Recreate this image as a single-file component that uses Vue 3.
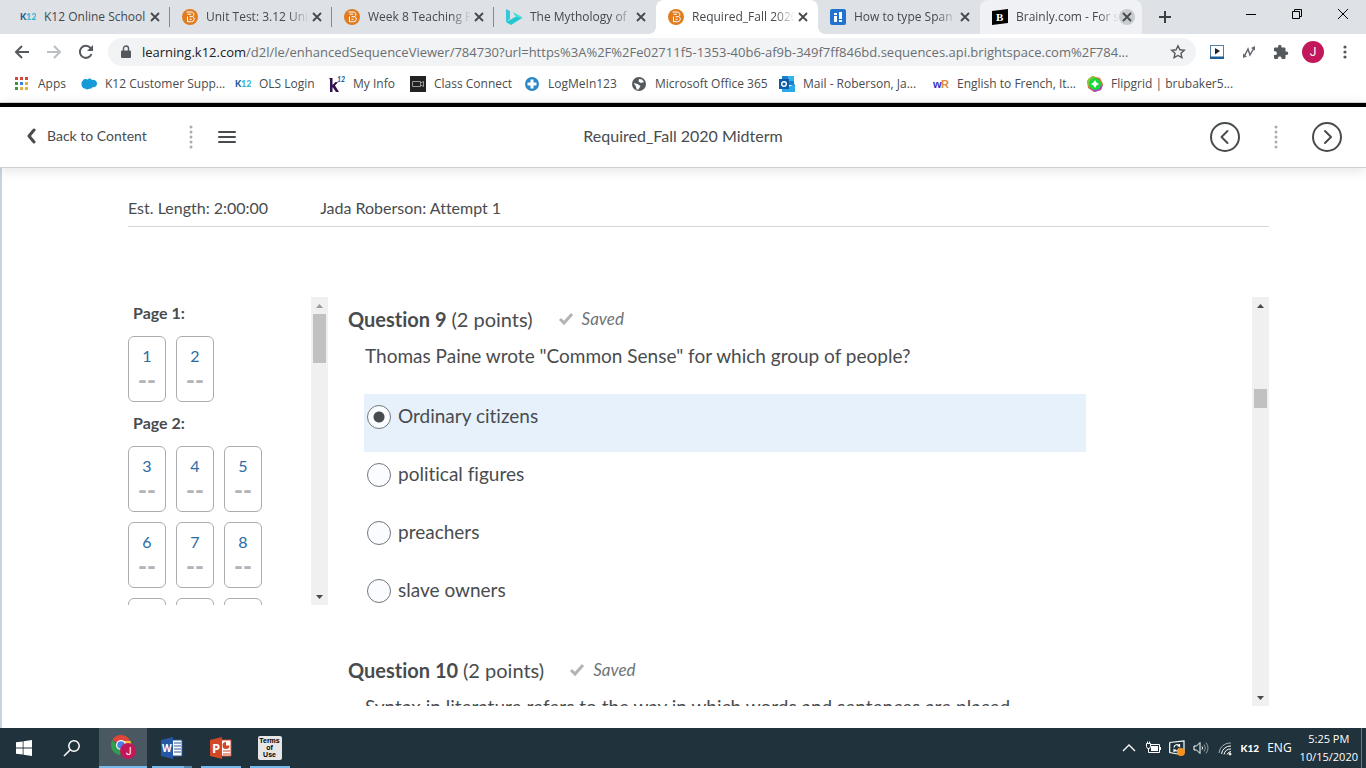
<script setup>
import { ref } from "vue";

const tabs = [
  { title: "K12 Online School", icon: "k12" },
  { title: "Unit Test: 3.12 Uni", icon: "brightspace" },
  { title: "Week 8 Teaching P", icon: "brightspace" },
  { title: "The Mythology of", icon: "bing" },
  { title: "Required_Fall 2020", icon: "brightspace", active: true },
  { title: "How to type Span", icon: "howto" },
  { title: "Brainly.com - For s", icon: "brainly", hovered: true },
];

const bookmarks = [
  { title: "Apps", icon: "apps" },
  { title: "K12 Customer Supp...", icon: "cloud" },
  { title: "OLS Login", icon: "k12" },
  { title: "My Info", icon: "myinfo" },
  { title: "Class Connect", icon: "camera" },
  { title: "LogMeIn123", icon: "logmein" },
  { title: "Microsoft Office 365", icon: "globe" },
  { title: "Mail - Roberson, Ja...", icon: "outlook" },
  { title: "English to French, It...", icon: "wordref" },
  { title: "Flipgrid | brubaker5...", icon: "flipgrid" },
];

const pages = [
  { name: "Page 1:", questions: [1, 2] },
  { name: "Page 2:", questions: [3, 4, 5, 6, 7, 8, 9, 10, 11] },
];

const questions = [
  {
    number: 9,
    text: 'Thomas Paine wrote "Common Sense" for which group of people?',
    options: ["Ordinary citizens", "political figures", "preachers", "slave owners"],
  },
  {
    number: 10,
    text: "Syntax in literature refers to the way in which words and sentences are placed",
    options: [],
  },
];

const answers = ref({ 9: "Ordinary citizens" });

const listScroll = { top: 0, size: 18 };
const quizScroll = { top: 20, size: 5 };
</script>

<template>
  <svg class="sprite" aria-hidden="true">
    <symbol id="k12" viewBox="0 0 16 16">
      <text x="0" y="11" font-family="Lato, sans-serif" font-weight="900" font-size="9" fill="#1c5c96">K</text>
      <text x="6" y="11" font-family="Lato, sans-serif" font-weight="900" font-size="9" fill="#35b8d8">12</text>
    </symbol>
    <symbol id="brightspace" viewBox="0 0 16 16">
      <circle cx="8" cy="8" r="8" fill="#e07b1f" />
      <path d="M4.500 3h4.700a2.400 2.400 0 0 1 1.400 4.500a2.700 2.700 0 0 1-1 5.200H5.500V7.500" fill="none" stroke="#fff" />
      <path d="M5.500 5.200h3.700M7.500 7.700h3M7.500 10.300h2.200" fill="none" stroke="#fff" />
    </symbol>
    <symbol id="bing" viewBox="0 0 16 16">
      <path d="M0 0l4 2v8l-4 3z" fill="#35c8d8" />
      <path d="M0 13l11-6 5 2-11 7z" fill="#22c7cf" />
      <path d="M7 3l9 5v2l-7-3z" fill="#45e0dc" />
    </symbol>
    <symbol id="howto" viewBox="0 0 16 16">
      <rect width="16" height="16" rx="2" fill="#2273d0" />
      <path d="M4 4h3v2H4zM4 7h3v6H4zM9 3h3v7H9zM9 11h3v2H9z" fill="#fff" />
    </symbol>
    <symbol id="brainly" viewBox="0 0 16 16">
      <path d="M0 2l16-2v14l-16 2z" fill="#000" />
      <text x="4" y="12" font-family="Liberation Serif, serif" font-weight="700" font-size="11" fill="#fff">B</text>
    </symbol>
    <symbol id="close" viewBox="0 0 16 16">
      <path d="M4 4l8 8M12 4l-8 8" stroke="#45494d" stroke-width="1.800" />
    </symbol>
    <symbol id="apps" viewBox="0 0 16 16">
      <path d="M1 1h3v3H1zM6 1h3v3H6zM11 1h3v3h-3z" fill="#d6483c" />
      <path d="M1 6h3v3H1z" fill="#3a9150" />
      <path d="M6 6h3v3H6z" fill="#3d7de0" />
      <path d="M11 6h3v3h-3zM6 11h3v3H6zM11 11h3v3h-3z" fill="#e8b03a" />
      <path d="M1 11h3v3H1z" fill="#3a9150" />
    </symbol>
    <symbol id="cloud" viewBox="0 0 16 16">
      <path d="M4 12.500a3.400 3.400 0 0 1-3.300-4A3 3 0 0 1 1.500 5a3.500 3.500 0 0 1 5-1.600a3.200 3.200 0 0 1 4.500.6a3.700 3.700 0 0 1 5 3.500a3.700 3.700 0 0 1-4.600 3.700A3 3 0 0 1 8 12.700a3 3 0 0 1-4-.2z" fill="#169bd8" />
    </symbol>
    <symbol id="myinfo" viewBox="0 0 16 16">
      <path d="M0 2h3.500v7l3-3H9L6 9.500l4 6.500H7l-3.500-5v5H1V3.500z" fill="#35124f" />
      <text x="8" y="6" font-family="Lato, sans-serif" font-style="italic" font-weight="900" font-size="7" fill="#1c5c96">12</text>
    </symbol>
    <symbol id="camera" viewBox="0 0 16 16">
      <rect width="16" height="16" fill="#222" />
      <path d="M2.500 5.500h8v5h-8zM10.500 7l3-1.500v5l-3-1.500z" fill="none" stroke="#999" />
    </symbol>
    <symbol id="logmein" viewBox="0 0 16 16">
      <circle cx="8" cy="8" r="7" fill="#2a88c8" />
      <path d="M8 3.500v9M3.500 8h9" stroke="#fff" stroke-width="3" />
    </symbol>
    <symbol id="globe" viewBox="0 0 16 16">
      <circle cx="8" cy="8" r="7" fill="#55595d" />
      <path d="M2.500 7l4 1 3 2-2 3.500h-2l-.5-3zM8 3l3 .5 2 2.500-3 1-2.500-1.500z" fill="#fff" />
    </symbol>
    <symbol id="outlook" viewBox="0 0 16 16">
      <path d="M3 0h12v9H3z" fill="#1b7fd0" />
      <path d="M9 0h6v5H9z" fill="#35b4ee" />
      <path d="M3 9l6 2 7-3v8H3z" fill="#28a8ea" />
      <path d="M0 3h10v10H0z" fill="#0c5ba8" />
      <circle cx="5" cy="8" r="2.300" fill="none" stroke="#fff" stroke-width="1.400" />
    </symbol>
    <symbol id="wordref" viewBox="0 0 16 16">
      <text x="0" y="12" font-family="Liberation Sans, sans-serif" font-weight="700" font-size="11" fill="#3a2fc0">w</text>
      <text x="8" y="12" font-family="Liberation Sans, sans-serif" font-weight="700" font-size="11" fill="#e08a3a">R</text>
    </symbol>
    <symbol id="flipgrid" viewBox="0 0 16 16">
      <path d="M5 0l8 2 3 6-2 6-7 2-6-4L0 5z" fill="#e0703a" />
      <path d="M0 6l2-4 5-2 3 3-8 8z" fill="#7fc93a" />
      <path d="M2 12l6 4 6-2 2-5z" fill="#a84ac0" />
      <circle cx="8" cy="8" r="6" fill="#16d83a" />
      <path d="M8 4l1.500 2.500L12 8 9.500 9.500 8 12 6.500 9.500 4 8l2.500-1.500z" fill="#fff" />
    </symbol>
    <symbol id="dots" viewBox="0 0 4 24">
      <g fill="#a9adb0">
        <circle cx="2" cy="2" r="1.500" />
        <circle cx="2" cy="7" r="1.500" />
        <circle cx="2" cy="12" r="1.500" />
        <circle cx="2" cy="17" r="1.500" />
        <circle cx="2" cy="22" r="1.500" />
      </g>
    </symbol>
    <symbol id="arrow-up" viewBox="0 0 17 17">
      <path d="M5 11l3.500-4 3.500 4z" fill="currentColor" />
    </symbol>
    <symbol id="arrow-down" viewBox="0 0 17 17">
      <path d="M5 7l3.500 4 3.500-4z" fill="currentColor" />
    </symbol>
  </svg>

  <div class="screen">
    <div class="tab-strip">
      <div
        v-for="tab in tabs"
        :key="tab.title"
        class="tab"
        :class="{ active: tab.active, hovered: tab.hovered }"
      >
        <svg class="icon"><use :href="'#' + tab.icon" /></svg>
        <span class="tab-title">{{ tab.title }}</span>
        <button class="tab-close" aria-label="Close tab">
          <svg class="icon"><use href="#close" /></svg>
        </button>
      </div>
      <button class="new-tab" aria-label="New tab">
        <svg width="14" height="14" viewBox="0 0 14 14">
          <path d="M7 1v12M1 7h12" stroke="#3c4043" stroke-width="2" />
        </svg>
      </button>
      <div class="window-controls">
        <button aria-label="Minimize">
          <svg width="12" height="12" viewBox="0 0 12 12"><path d="M1 6.500h10" stroke="#000" /></svg>
        </button>
        <button aria-label="Restore">
          <svg width="12" height="12" viewBox="0 0 12 12">
            <path d="M1.500 3.500h7v7h-7zM3.500 3.500v-2h7v7h-2" fill="none" stroke="#000" />
          </svg>
        </button>
        <button aria-label="Close">
          <svg width="12" height="12" viewBox="0 0 12 12"><path d="M1 1l10 10M11 1L1 11" stroke="#000" /></svg>
        </button>
      </div>
    </div>

    <div class="toolbar">
      <button aria-label="Back">
        <svg width="16" height="16" viewBox="0 0 16 16">
          <path d="M15 8H2M8 2L2 8l6 6" fill="none" stroke="#55595d" stroke-width="2" />
        </svg>
      </button>
      <button aria-label="Forward">
        <svg width="16" height="16" viewBox="0 0 16 16">
          <path d="M1 8h13M8 2l6 6-6 6" fill="none" stroke="#bcbfc3" stroke-width="2" />
        </svg>
      </button>
      <button aria-label="Reload">
        <svg width="16" height="16" viewBox="0 0 16 16">
          <path d="M13.500 10A6 6 0 1 1 12.500 4l1 1" fill="none" stroke="#55595d" stroke-width="2" />
          <path d="M15 1v6H9z" fill="#55595d" />
        </svg>
      </button>
      <div class="address-bar">
        <svg width="10" height="14" viewBox="0 0 10 14">
          <path d="M1 5.500h8a1 1 0 0 1 1 1V12a1 1 0 0 1-1 1H1a1 1 0 0 1-1-1V6.500a1 1 0 0 1 1-1z" fill="#55595d" />
          <path d="M2.500 6V3.500a2.500 2.500 0 0 1 5 0V6" fill="none" stroke="#55595d" stroke-width="1.400" />
        </svg>
        <span class="url"><b>learning.k12.com</b>/d2l/le/enhancedSequenceViewer/784730?url=https%3A%2F%2Fe02711f5-1353-40b6-af9b-349f7ff846bd.sequences.api.brightspace.com%2F784...</span>
        <button aria-label="Bookmark this tab">
          <svg width="16" height="16" viewBox="0 0 16 16">
            <path d="M8 1.800l1.900 4 4.400.5-3.300 3 .9 4.400L8 11.500l-3.900 2.200.9-4.400-3.300-3 4.400-.5z" fill="none" stroke="#55595d" stroke-width="1.400" />
          </svg>
        </button>
      </div>
      <div class="extensions">
        <button aria-label="Video extension">
          <svg width="16" height="16" viewBox="0 0 16 16">
            <rect x="1.500" y="1.500" width="13" height="12" fill="#fff" stroke="#55809f" />
            <path d="M1 12.500h14V15H1z" fill="#1d5f94" />
            <path d="M6 4l5 3-5 3.500z" fill="#222" />
          </svg>
        </button>
        <button aria-label="Pen extension">
          <svg width="16" height="16" viewBox="0 0 16 16">
            <path d="M3.500 12L7 5l2 6 4-7" fill="none" stroke="#65696d" stroke-width="1.500" />
            <path d="M2 9.500V14l4-1.500zM10 4l4-2v4.500z" fill="#65696d" />
          </svg>
        </button>
        <button aria-label="Extensions">
          <svg width="16" height="16" viewBox="0 0 16 16">
            <path d="M13.500 7.500h-1V4.800c0-.8-.6-1.300-1.300-1.300H8.500v-1a1.700 1.700 0 0 0-3.400 0v1H2.400C1.600 3.500 1 4 1 4.800v2.500h1a1.900 1.900 0 0 1 0 3.800H1v2.600c0 .8.600 1.300 1.400 1.300h2.500v-1a1.900 1.900 0 0 1 3.700 0v1h2.600c.7 0 1.300-.5 1.300-1.300V11h1a1.700 1.700 0 0 0 0-3.500z" fill="#55595d" />
          </svg>
        </button>
        <button class="avatar" aria-label="Profile">J</button>
        <button aria-label="Menu">
          <svg width="16" height="16" viewBox="0 0 16 16" fill="#55595d">
            <circle cx="8" cy="3" r="1.600" />
            <circle cx="8" cy="8" r="1.600" />
            <circle cx="8" cy="13" r="1.600" />
          </svg>
        </button>
      </div>
    </div>

    <nav class="bookmarks">
      <a v-for="item in bookmarks" :key="item.title" href="#">
        <svg class="icon"><use :href="'#' + item.icon" /></svg>
        {{ item.title }}
      </a>
    </nav>

    <header class="viewer-header">
      <div class="header-left">
        <a class="back-link" href="#">
          <svg width="10" height="16" viewBox="0 0 10 16">
            <path d="M8 2L3 8l5 6" fill="none" stroke="#494c4e" stroke-width="3" stroke-linecap="round" stroke-linejoin="round" />
          </svg>
          Back to Content
        </a>
        <svg class="dots"><use href="#dots" /></svg>
        <button aria-label="Open table of contents">
          <svg width="18" height="14" viewBox="0 0 18 14">
            <path d="M1 2h16M1 7h16M1 12h16" stroke="#494c4e" stroke-width="2" stroke-linecap="round" />
          </svg>
        </button>
      </div>
      <h1>Required_Fall 2020 Midterm</h1>
      <div class="header-right">
        <button aria-label="Previous">
          <svg width="30" height="30" viewBox="0 0 30 30" fill="none" stroke="#494c4e" stroke-width="2">
            <circle cx="15" cy="15" r="14" />
            <path d="M17.500 9L11.500 15l6 6" stroke-linecap="round" stroke-linejoin="round" />
          </svg>
        </button>
        <svg class="dots"><use href="#dots" /></svg>
        <button aria-label="Next">
          <svg width="30" height="30" viewBox="0 0 30 30" fill="none" stroke="#494c4e" stroke-width="2">
            <circle cx="15" cy="15" r="14" />
            <path d="M13 9l6 6-6 6" stroke-linecap="round" stroke-linejoin="round" />
          </svg>
        </button>
      </div>
    </header>

    <main class="quiz">
      <div class="quiz-info">
        <span>Est. Length: 2:00:00</span>
        <span>Jada Roberson: Attempt 1</span>
      </div>

      <div class="quiz-body">
        <aside class="pane page-pane">
          <div class="pane-content">
            <section v-for="page in pages" :key="page.name" class="page-group">
              <h2>{{ page.name }}</h2>
              <div class="page-questions">
                <a v-for="n in page.questions" :key="n" href="#" class="question-box">
                  <span>{{ n }}</span>
                  <span class="dashes">--</span>
                </a>
              </div>
            </section>
          </div>
          <div class="scrollbar at-top">
            <svg class="arrow arrow-up"><use href="#arrow-up" /></svg>
            <div class="track">
              <div :style="{ height: listScroll.top + '%' }"></div>
              <div class="thumb" :style="{ height: listScroll.size + '%' }"></div>
            </div>
            <svg class="arrow"><use href="#arrow-down" /></svg>
          </div>
        </aside>

        <div class="pane question-pane">
          <div class="pane-content">
            <section v-for="q in questions" :key="q.number" class="question">
              <div class="question-head">
                <h2>Question {{ q.number }} <span>(2 points)</span></h2>
                <span class="saved">
                  <svg width="16" height="14" viewBox="0 0 16 14">
                    <path d="M2 7l4 4 8-9" fill="none" stroke="#b1b5b8" stroke-width="3" />
                  </svg>
                  Saved
                </span>
              </div>
              <p>{{ q.text }}</p>
              <div class="options">
                <label
                  v-for="option in q.options"
                  :key="option"
                  :class="{ selected: answers[q.number] === option }"
                >
                  <input
                    type="radio"
                    :name="'question-' + q.number"
                    :value="option"
                    v-model="answers[q.number]"
                  />
                  {{ option }}
                </label>
              </div>
            </section>
          </div>
          <div class="scrollbar">
            <svg class="arrow arrow-up"><use href="#arrow-up" /></svg>
            <div class="track">
              <div :style="{ height: quizScroll.top + '%' }"></div>
              <div class="thumb" :style="{ height: quizScroll.size + '%' }"></div>
            </div>
            <svg class="arrow"><use href="#arrow-down" /></svg>
          </div>
        </div>
      </div>
    </main>

    <footer class="taskbar">
      <button class="task" aria-label="Start">
        <svg width="16" height="16" viewBox="0 0 16 16">
          <path d="M0 2.300L6.700 1.400v6.200H0zM7.500 1.300L16 0v7.600H7.500zM0 8.400h6.700v6.200L0 13.700zM7.500 8.400H16V16l-8.500-1.300z" fill="#fff" />
        </svg>
      </button>
      <button class="task" aria-label="Search">
        <svg width="18" height="18" viewBox="0 0 18 18" fill="none" stroke="#fff" stroke-width="1.500">
          <circle cx="11" cy="7" r="5.200" />
          <path d="M7.300 10.700L1 17" />
        </svg>
      </button>
      <button class="task current" aria-label="Chrome">
        <svg width="26" height="26" viewBox="0 0 26 26">
          <path d="M11 11L2.300 6A10 10 0 0 1 20 6.500L21 9H11z" fill="#e0453a" />
          <path d="M2.300 6A10 10 0 0 0 10 21l4-7-4-1z" fill="#2f9e50" />
          <path d="M12 7h8.500a10 10 0 0 1-9.500 14l4-7z" fill="#f7c535" />
          <circle cx="11" cy="11" r="5" fill="#fff" />
          <circle cx="11" cy="11" r="3.800" fill="#4a83e8" />
          <circle cx="18" cy="17" r="8" fill="#c2185b" />
          <text x="16" y="21" font-family="Roboto, sans-serif" font-size="10" fill="#fff">J</text>
        </svg>
      </button>
      <button class="task running grouped" aria-label="Word">
        <svg width="24" height="22" viewBox="0 0 24 22">
          <path d="M12 3h10v16H12z" fill="#fff" stroke="#2b579a" />
          <path d="M14 6h7M14 9h7M14 12h7M14 15h7" stroke="#2b579a" stroke-width="1.200" />
          <path d="M1 3l12-3v22L1 19z" fill="#2458a6" />
          <text x="2" y="15" font-family="Open Sans, sans-serif" font-weight="700" font-size="10" fill="#fff">W</text>
        </svg>
      </button>
      <button class="task running" aria-label="PowerPoint">
        <svg width="24" height="22" viewBox="0 0 24 22">
          <path d="M12 3h10v16H12z" fill="#fff" stroke="#d24726" />
          <path d="M14 14h7M14 17h7" stroke="#d24726" stroke-width="1.200" />
          <path d="M17 5a3.500 3.500 0 1 0 3.500 3.500H17z" fill="#d24726" />
          <path d="M1 3l12-3v22L1 19z" fill="#d24726" />
          <text x="3" y="16" font-family="Open Sans, sans-serif" font-weight="700" font-size="13" fill="#fff">P</text>
        </svg>
      </button>
      <button class="task running" aria-label="Terms of Use">
        <span class="terms">Terms<br />of<br />Use</span>
      </button>

      <div class="tray">
        <svg width="16" height="16" viewBox="0 0 16 16" fill="none" stroke="#fff" stroke-width="1.400">
          <path d="M2 11l6-6 6 6" />
        </svg>
        <svg width="16" height="16" viewBox="0 0 16 16" fill="none" stroke="#fff">
          <path d="M5 4.500h9.500v8H3.500V9M1.500 3.500h4v3l-1 2h-2l-1-2zM2.500 1.500v2M4.500 1.500v2M15.500 7v3" />
          <path d="M6 6h7v5H6z" fill="#fff" stroke="none" />
        </svg>
        <svg width="16" height="16" viewBox="0 0 16 16" fill="none" stroke="#fff">
          <path d="M.7 2.500L15 1v10M.7 2.500v10L9 14" stroke-width="1.200" />
          <path d="M5 7.500a3 3 0 0 1 5.500-1.500V4M10.500 6h-2M10 8.500A3 3 0 0 1 5 10v2M5 10h2" stroke-width="1.200" />
          <circle cx="12" cy="12" r="4" fill="#f7941d" stroke="none" />
        </svg>
        <svg width="16" height="16" viewBox="0 0 16 16" fill="none" stroke="#fff">
          <path d="M1 6h2.500L7 2.500v11L3.500 10H1z" />
          <path d="M9 6.500q1.200 1.500 0 3" />
          <path d="M11 4.500q3 3.500 0 7M13 2.500q4 5.500 0 11" opacity=".5" />
        </svg>
        <svg width="16" height="16" viewBox="0 0 16 16" fill="none" stroke="#fff">
          <path d="M2 13A11 11 0 0 1 14 3" opacity=".6" />
          <path d="M4.500 14A9 9 0 0 1 14 6M7 14.500A7 7 0 0 1 14 9M10 14.500A5 5 0 0 1 14 11.500" />
          <circle cx="13" cy="14" r="1" fill="#fff" />
        </svg>
        <span class="tray-k12">K12</span>
        <span>ENG</span>
        <time>5:25 PM<br />10/15/2020</time>
      </div>
    </footer>
  </div>
</template>

<style>
body {
  margin: 0;
}
</style>

<style scoped>
* {
  box-sizing: border-box;
}
.screen {
  display: flex;
  flex-direction: column;
  height: 100vh;
  background: #fff;
  color: #494c4e;
  font-family: Lato, sans-serif;
  font-size: 16px;
  font-variant-ligatures: none;
  line-height: 24px;
  overflow: hidden;
}
.sprite {
  display: none;
}
button {
  display: flex;
  align-items: center;
  justify-content: center;
  padding: 0;
  border: none;
  background: none;
  font: inherit;
  color: inherit;
}
a {
  color: inherit;
  text-decoration: none;
}
svg {
  flex: none;
}
.icon {
  width: 16px;
  height: 16px;
}
.tab-strip,
.toolbar,
.bookmarks,
.taskbar {
  display: flex;
  align-items: center;
  flex: none;
  font-family: "Open Sans", sans-serif;
  font-size: 12px;
}
.tab-strip {
  height: 34px;
  padding-left: 8px;
  background: #dee1e6;
}
.tab {
  position: relative;
  display: flex;
  align-items: center;
  flex: 0 1 162px;
  min-width: 0;
  height: 34px;
  padding: 0 7px 0 12px;
  color: #45494d;
}
.tab-title {
  flex: 1;
  min-width: 0;
  margin-left: 8px;
  overflow: hidden;
  white-space: nowrap;
  mask-image: linear-gradient(to right, #000 80%, transparent);
}
.tab:first-child .tab-title {
  mask-image: none;
}
.tab-close {
  width: 16px;
  height: 16px;
  border-radius: 50%;
}
.tab:nth-child(-n + 3) {
  background: linear-gradient(#85898d, #85898d) right center / 1px 20px no-repeat;
}
.tab.active {
  border-radius: 8px 8px 0 0;
  background: #fff;
}
/* flared feet of the active tab */
.tab.active::before,
.tab.active::after {
  content: "";
  position: absolute;
  bottom: 0;
  width: 8px;
  height: 8px;
}
.tab.active::before {
  right: 100%;
  background: radial-gradient(circle at 0 0, transparent 8px, #fff 8px);
}
.tab.active::after {
  left: 100%;
  background: radial-gradient(circle at 100% 0, transparent 8px, #fff 8px);
}
.tab.hovered {
  border-radius: 8px 8px 0 0;
  background: #eff1f4;
}
.tab.hovered .tab-close {
  background: #c8cbcf;
}
.new-tab {
  width: 28px;
  height: 28px;
  margin-left: 9px;
}
.window-controls {
  display: flex;
  align-self: flex-start;
  margin-left: auto;
}
.window-controls button {
  width: 46px;
  height: 28px;
}
.toolbar {
  height: 36px;
  padding: 0 13px 0 14px;
  gap: 16px;
}
.address-bar {
  display: flex;
  align-items: center;
  flex: 1;
  min-width: 0;
  height: 28px;
  margin-left: -2px;
  padding: 0 10px 0 13px;
  border-radius: 14px;
  background: #f1f3f4;
}
.url {
  flex: 1;
  min-width: 0;
  margin: 0 8px 0 11px;
  overflow: hidden;
  white-space: nowrap;
  font-size: 13px;
  color: #6b6f73;
}
.url b {
  font-weight: 400;
  color: #202124;
}
.extensions {
  display: flex;
  align-items: center;
  gap: 16px;
  margin-left: -3px;
}
.avatar {
  width: 22px;
  height: 22px;
  margin: 0 -3px;
  border-radius: 50%;
  background: #c2185b;
  color: #fff;
  font-family: Roboto, sans-serif;
}
.bookmarks {
  display: grid;
  grid-template-columns: 67px 154px 94px 81px 114px 107px 148px 154px 154px 1fr;
  height: 33px;
  padding: 0 14px 4px;
  border-bottom: 1px solid #d5d7da;
}
.bookmarks a {
  display: flex;
  align-items: center;
  gap: 8px;
  white-space: nowrap;
}
.viewer-header {
  display: grid;
  grid-template-columns: 1fr auto 1fr;
  align-items: center;
  flex: none;
  height: 65px;
  padding: 0 24px;
  border-top: 4px solid #000;
  border-bottom: 1px solid #cdd0d3;
  box-shadow: 0 2px 12px rgba(0, 0, 0, 0.12);
  z-index: 1;
}
.viewer-header h1 {
  margin: 0;
  padding-bottom: 2px;
  font-size: 16px;
  font-weight: 400;
}
.header-left,
.header-right {
  display: flex;
  align-items: center;
}
.header-right {
  justify-content: flex-end;
  gap: 34px;
}
.dots {
  width: 4px;
  height: 24px;
}
.back-link {
  display: flex;
  align-items: center;
  gap: 11px;
  margin: 0 42px 0 2px;
  padding-bottom: 2px;
  font-size: 14px;
}
.header-left button {
  margin-left: 25px;
}
.quiz {
  display: flex;
  flex-direction: column;
  flex: 1;
  min-height: 0;
  padding: 28px 97px 22px 126px;
  border-left: 2px solid #c9d3dd;
}
.quiz-info {
  display: flex;
  gap: 52px;
  padding-bottom: 6px;
  border-bottom: 1px solid #d3d5d8;
}
.quiz-body {
  display: flex;
  align-items: flex-start;
  gap: 20px;
  flex: 1;
  min-height: 0;
  margin-top: 70px;
}
.pane {
  display: flex;
  overflow: hidden;
}
.pane-content {
  flex: 1;
  min-width: 0;
}
.page-pane {
  width: 200px;
  height: 308px;
}
.question-pane {
  flex: 1;
  height: 100%;
}
.page-group {
  padding-top: 4px;
}
.page-group + .page-group {
  padding-top: 9px;
}
.page-group h2 {
  margin: 0 0 11px 5px;
  font-size: 16px;
}
.page-questions {
  display: grid;
  grid-template-columns: repeat(3, 38px);
  gap: 10px;
}
.question-box {
  display: flex;
  flex-direction: column;
  align-items: center;
  height: 66px;
  padding-top: 7px;
  border: 1px solid #a9adb0;
  border-radius: 6px;
  color: #2b6ca3;
}
.dashes {
  color: #b1b5b8;
  font-size: 24px;
  font-weight: 900;
}
.scrollbar {
  display: flex;
  flex-direction: column;
  flex: none;
  width: 17px;
  background: #f0f0f0;
}
.arrow {
  width: 17px;
  height: 17px;
  color: #45494d;
}
.at-top .arrow-up {
  color: #9a9da0;
}
.track {
  flex: 1;
  padding: 0 2px;
}
.thumb {
  background: #c1c1c1;
}
.question {
  padding-top: 11px;
  padding-bottom: 22px;
  font-size: 19px;
  line-height: 22px;
}
.question-head {
  display: flex;
  align-items: center;
}
.question-head h2 {
  margin: 0;
  font-size: 20px;
}
.question-head h2 span {
  font-weight: 400;
}
.saved {
  display: flex;
  align-items: center;
  gap: 8px;
  margin-left: 25px;
  font-size: 17px;
  font-style: italic;
  color: #6e7376;
}
.question p {
  margin: 15px 0 27px 17px;
  white-space: nowrap;
}
.options {
  max-width: 722px;
  margin-left: 16px;
}
.options label {
  display: flex;
  align-items: flex-start;
  gap: 7px;
  height: 58px;
  padding: 11px 3px;
}
.options label.selected {
  background: #e6f1fc;
}
.options input {
  appearance: none;
  width: 24px;
  height: 24px;
  margin: 0;
  border: 1px solid #72777a;
  border-radius: 50%;
  background: #fafcff;
}
.options input:checked {
  background: radial-gradient(circle, #494c4e 5px, #fafcff 6px);
}
.taskbar {
  height: 40px;
  background: #20323b;
  color: #fff;
}
.task {
  width: 48px;
  height: 40px;
}
.task.current {
  margin-left: 3px;
  border-bottom: 2px solid #76b9ed;
  background: #4a5961;
}
.task.running {
  width: 49px;
  background: linear-gradient(#76b9ed, #76b9ed) center bottom / 40px 2px no-repeat;
}
.task.grouped {
  background: linear-gradient(to right, #76b9ed 32px, #5489b0 32px) center bottom / 40px 2px no-repeat;
}
.terms {
  width: 24px;
  height: 24px;
  padding-top: 1px;
  border-radius: 2px;
  background: #e6e6e6;
  color: #000;
  font-family: "Liberation Sans", sans-serif;
  font-size: 7px;
  font-weight: 700;
  line-height: 7px;
}
.tray {
  display: flex;
  align-items: center;
  gap: 8px;
  height: 40px;
  margin-left: auto;
  margin-right: 4px;
  padding-right: 3px;
  border-right: 1px solid #6c7880;
}
.tray-k12 {
  font-family: Lato, sans-serif;
  font-size: 10px;
  font-weight: 900;
}
.tray time {
  font-size: 11px;
  line-height: 18px;
  text-align: center;
}
</style>
